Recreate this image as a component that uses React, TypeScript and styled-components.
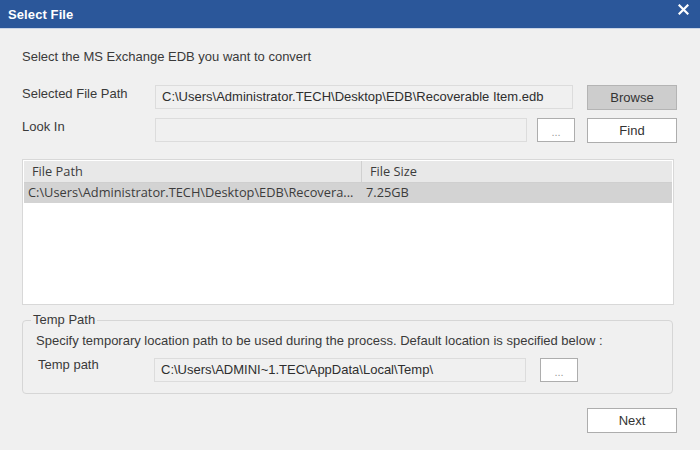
import styled, { createGlobalStyle } from 'styled-components';

const GlobalStyle = createGlobalStyle`
  html, body {
    margin: 0;
    padding: 0;
    background: #f0f0f0;
  }
  * {
    box-sizing: border-box;
  }
`;

const Dialog = styled.div`
  width: 700px;
  height: 450px;
  background: #f0f0f0;
  font-family: 'Liberation Sans', Arial, sans-serif;
  font-size: 13px;
  color: #3a3a3a;
  display: flex;
  flex-direction: column;
  overflow: hidden;
`;

const TitleBar = styled.div`
  height: 29px;
  flex-shrink: 0;
  background: #2b579a;
  display: flex;
  align-items: flex-start;
  justify-content: space-between;
  padding: 0 10px 0 8px;
  border-bottom: 1px solid #c9d4e6;
`;

const Title = styled.div`
  color: #ffffff;
  font-weight: 700;
  font-size: 13px;
  line-height: 30px;
  letter-spacing: 0.1px;
`;

const CloseButton = styled.button`
  width: 14px;
  height: 14px;
  margin-top: 2px;
  padding: 0;
  border: 0;
  background: transparent;
  display: flex;
  align-items: center;
  justify-content: center;
  cursor: pointer;
`;

const Body = styled.div`
  flex: 1;
  padding: 20px 23px 0 22px;
  display: flex;
  flex-direction: column;
`;

const Intro = styled.div`
  line-height: 16px;
  margin-bottom: 20px;
`;

const FieldRow = styled.div<{ $cols: string; $mb?: number }>`
  display: grid;
  grid-template-columns: ${(p) => p.$cols};
  align-items: start;
  margin-bottom: ${(p) => p.$mb ?? 0}px;
`;

const Label = styled.div<{ $shift?: number }>`
  line-height: 18px;
  margin-top: ${(p) => p.$shift ?? 0}px;
  margin-left: ${(p) => (p.$shift ? 2 : 0)}px;
`;

const PathInput = styled.div`
  height: 24px;
  border: 1px solid #dcdcdc;
  background: #f0f0f0;
  padding: 0 6px;
  line-height: 21px;
  white-space: nowrap;
  overflow: hidden;
  color: #2e2e2e;
`;

const Button = styled.button<{ $pressed?: boolean }>`
  height: 25px;
  border: 1px solid ${(p) => (p.$pressed ? '#b4b4b4' : '#adadad')};
  background: ${(p) => (p.$pressed ? '#cdcdcd' : '#ffffff')};
  font-family: 'Liberation Sans', Arial, sans-serif;
  font-size: 13px;
  color: #333;
  padding: 0;
  cursor: pointer;
`;

const NextButton = styled(Button)`
  width: 90px;
`;

const DotsButton = styled(Button)`
  height: 24px;
  color: #9a9a9a;
  font-size: 11px;
  padding-top: 4px;
`;

const Table = styled.div`
  height: 146px;
  margin-bottom: 7px;
  border: 1px solid #d8d8d8;
  background: #ffffff;
  padding: 1px 1px 0;
  width: 652px;
`;

const TableRow = styled.div<{ $header?: boolean; $selected?: boolean }>`
  display: grid;
  grid-template-columns: 338px 1fr;
  height: ${(p) => (p.$header ? 22 : 20)}px;
  background: ${(p) => (p.$header ? '#e8e8e8' : p.$selected ? '#d3d3d3' : 'transparent')};
  border-bottom: ${(p) => (p.$header ? '1px solid #cfcfcf' : '0')};
  font-family: 'Open Sans', 'Liberation Sans', sans-serif;
  font-size: 12.8px;
  color: #3c3c3c;
`;

const Cell = styled.div<{ $header?: boolean; $divider?: boolean }>`
  padding-left: ${(p) => (p.$header ? 8 : 4)}px;
  line-height: ${(p) => (p.$header ? 21 : 19)}px;
  white-space: nowrap;
  overflow: hidden;
  border-right: ${(p) => (p.$divider ? '1px solid #d0d0d0' : '0')};
`;

const Group = styled.fieldset`
  margin: 0;
  width: 651px;
  border: 1px solid #d6d6d6;
  border-radius: 4px;
  padding: 0 0 11px 13px;
`;

const Legend = styled.legend`
  padding: 0 2px;
  margin-left: -5px;
  line-height: 16px;
`;

const GroupText = styled.div`
  line-height: 16px;
  margin: 5px 0 9px 0;
`;

const Footer = styled.div`
  display: flex;
  justify-content: flex-end;
  margin-top: 14px;
`;

function CloseIcon() {
  return (
    <svg width="11" height="11" viewBox="0 0 11 11">
      <path d="M1.5 1.5 L9.5 9.5 M9.5 1.5 L1.5 9.5" stroke="#ffffff" strokeWidth="2.2" strokeLinecap="square" />
    </svg>
  );
}

export default function App() {
  return (
    <>
      <GlobalStyle />
      <Dialog>
        <TitleBar>
          <Title>Select File</Title>
          <CloseButton aria-label="Close">
            <CloseIcon />
          </CloseButton>
        </TitleBar>
        <Body>
          <Intro>Select the MS Exchange EDB you want to convert</Intro>

          <FieldRow $cols="133px 418px 14px 90px" $mb={8}>
            <Label>Selected File Path</Label>
            <PathInput>C:\Users\Administrator.TECH\Desktop\EDB\Recoverable Item.edb</PathInput>
            <span />
            <Button $pressed>Browse</Button>
          </FieldRow>

          <FieldRow $cols="133px 372px 10px 38px 12px 90px" $mb={16}>
            <Label>Look In</Label>
            <PathInput />
            <span />
            <DotsButton>...</DotsButton>
            <span />
            <Button>Find</Button>
          </FieldRow>

          <Table>
            <TableRow $header>
              <Cell $header $divider>File Path</Cell>
              <Cell $header>File Size</Cell>
            </TableRow>
            <TableRow $selected>
              <Cell>C:\Users\Administrator.TECH\Desktop\EDB\Recovera...</Cell>
              <Cell>7.25GB</Cell>
            </TableRow>
          </Table>

          <Group>
            <Legend>Temp Path</Legend>
            <GroupText>
              Specify temporary location path to be used during the process. Default location is specified below :
            </GroupText>
            <FieldRow $cols="118px 372px 14px 38px">
              <Label $shift={-2}>Temp path</Label>
              <PathInput>C:\Users\ADMINI~1.TEC\AppData\Local\Temp\</PathInput>
              <span />
              <DotsButton>...</DotsButton>
            </FieldRow>
          </Group>

          <Footer>
            <NextButton>Next</NextButton>
          </Footer>
        </Body>
      </Dialog>
    </>
  );
}
